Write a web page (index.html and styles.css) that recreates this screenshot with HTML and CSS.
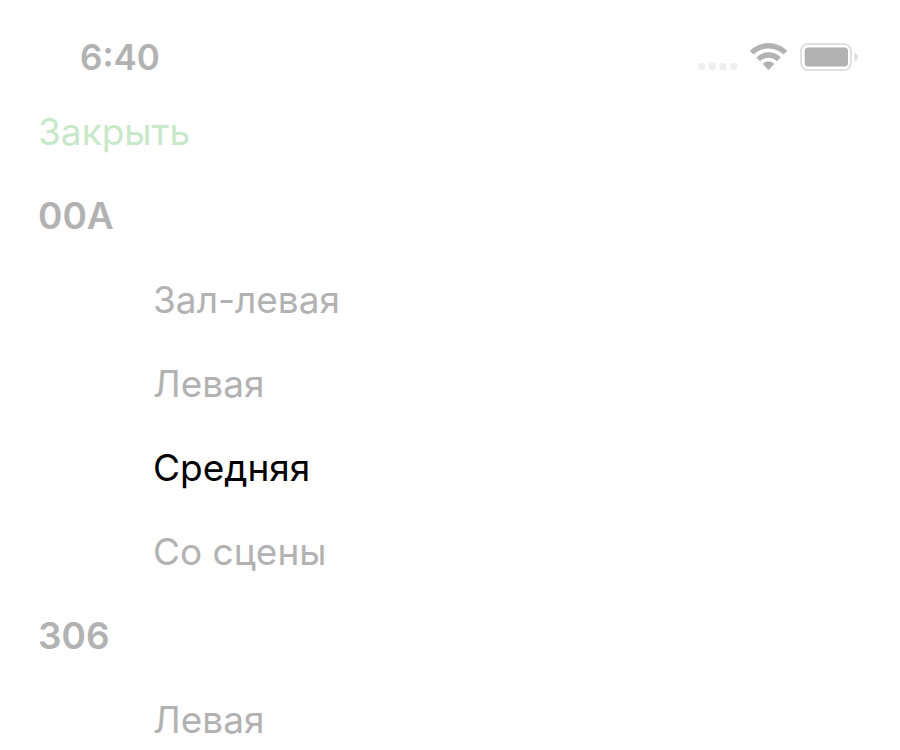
FILE: index.html
```html
<!DOCTYPE html>
<html lang="ru">
<head>
<meta charset="utf-8">
<meta name="viewport" content="width=device-width, initial-scale=1">
<title>00А</title>
<link rel="stylesheet" href="styles.css">
</head>
<body>
<header class="status">
  <time class="clock">6:40</time>
  <div class="indicators">
    <svg class="signal" viewBox="0 0 40 8" aria-hidden="true"><rect x="0" y="0" width="7" height="7" rx="2.5"/><rect x="10.7" y="0" width="7" height="7" rx="2.5"/><rect x="21.4" y="0" width="7" height="7" rx="2.5"/><rect x="32.1" y="0" width="7" height="7" rx="2.5"/></svg>
    <svg class="wifi" viewBox="0 0 38 28" aria-hidden="true"><path class="wave" d="M1.6 9.7A24 24 0 0 1 35.4 9.7M8.2 16.3A14.6 14.6 0 0 1 28.8 16.3"/><path d="M13 21.3Q12.6 20.8 13.2 20.4C16.1 18 20.9 18 23.8 20.4Q24.4 20.8 24 21.3L19.1 26.5Q18.5 27.2 17.9 26.5Z"/></svg>
    <svg class="battery" viewBox="0 0 58 28" aria-hidden="true"><rect class="shell" x="1" y="1" width="50" height="26" rx="7"/><rect x="4.7" y="4.6" width="43.3" height="18.8" rx="3.5"/><path class="cap" d="M54.5 9.8V18.2C56.5 17.4 57.6 16 57.6 14S56.5 10.6 54.5 9.8Z"/></svg>
  </div>
</header>
<main class="list">
  <button class="row close" type="button">Закрыть</button>
  <section>
    <h2 class="row">00А</h2>
    <ul class="options">
      <li><button class="row" type="button">Зал-левая</button></li>
      <li><button class="row" type="button">Левая</button></li>
      <li><button class="row selected" type="button">Средняя</button></li>
      <li><button class="row" type="button">Со сцены</button></li>
    </ul>
  </section>
  <section>
    <h2 class="row">306</h2>
    <ul class="options">
      <li><button class="row" type="button">Левая</button></li>
    </ul>
  </section>
</main>
</body>
</html>
```
FILE: styles.css
```css
* {
  box-sizing: border-box;
}

body {
  margin: 0;
  background: #fff;
  color: #b2b2b2;
  font-family: Inter, sans-serif;
  font-size: 37px;
}

.status {
  display: flex;
  justify-content: space-between;
  align-items: center;
  height: 90px;
  padding: 24px 42px 0 80px;
}

.clock {
  font-size: 35px;
  font-weight: 600;
}

.indicators {
  display: flex;
  align-items: center;
  gap: 12px;
}

svg {
  display: block;
  fill: #b2b2b2;
}

.signal {
  width: 40px;
  height: 8px;
  margin-top: 20px;
  fill: #efefef;
}

.wifi {
  width: 38px;
  height: 28px;
  overflow: visible;
}

.wifi .wave {
  fill: none;
  stroke: #b2b2b2;
  stroke-width: 5.4;
}

.battery {
  width: 58px;
  height: 28px;
}

.battery .shell {
  fill: none;
  stroke: #e0e0e0;
  stroke-width: 2;
}

.battery .cap {
  fill: #dadada;
}

.list {
  padding: 0 38px;
}

.row {
  display: block;
  width: 100%;
  height: 84px;
  margin: 0;
  padding: 0;
  border: 0;
  background: none;
  color: inherit;
  font: inherit;
  line-height: 84px;
  text-align: left;
}

h2.row {
  font-size: 37px;
  font-weight: 600;
}

.row.close {
  color: #c8e8ca;
}

.options {
  margin: 0;
  padding: 0 0 0 115px;
  list-style: none;
}

.row.selected {
  color: #000;
}
```
